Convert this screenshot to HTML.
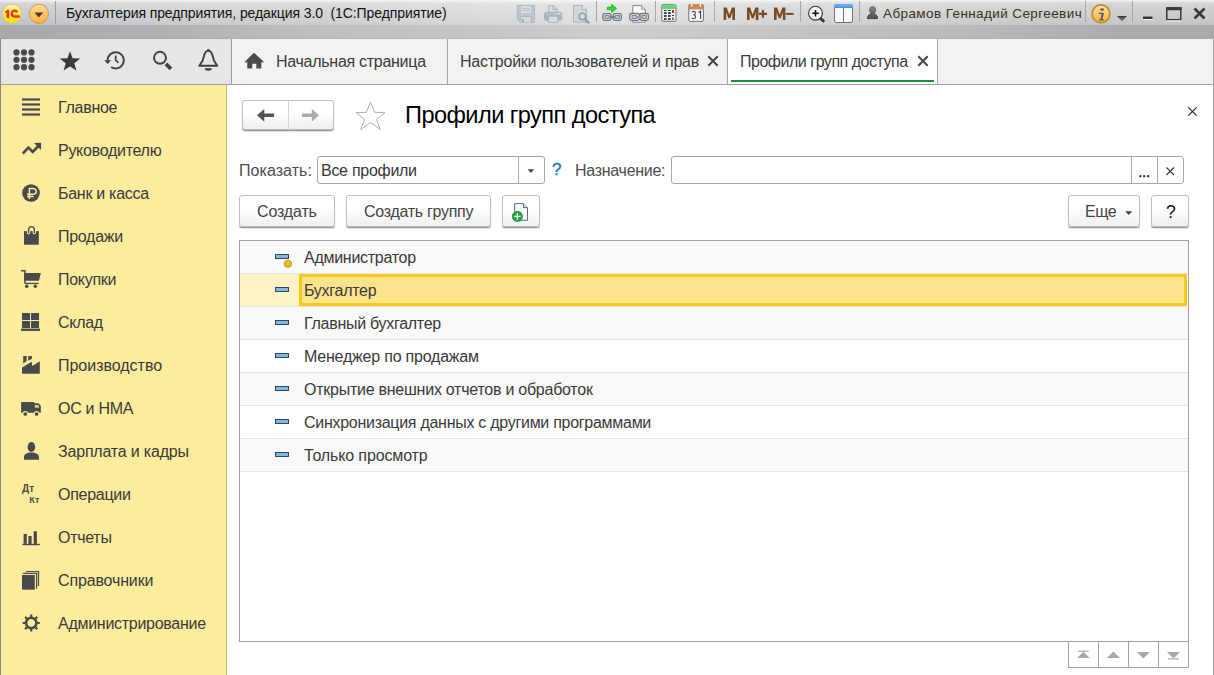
<!DOCTYPE html>
<html><head><meta charset="utf-8">
<style>
*{margin:0;padding:0;box-sizing:border-box}
html,body{width:1214px;height:675px;overflow:hidden;background:#fff;font-family:"Liberation Sans",sans-serif;color:#3a3a3a}
.a{position:absolute}
svg{position:absolute;overflow:visible}
.t16{font-size:16px;line-height:18px;letter-spacing:-0.28px;white-space:nowrap;position:absolute}
#title{left:0;top:0;width:1214px;height:25px;background:linear-gradient(to bottom,rgba(255,255,255,.8) 0,rgba(255,255,255,.5) 2px,rgba(255,255,255,.28) 4px,rgba(255,255,255,.05) 22px,rgba(255,255,255,0) 25px),linear-gradient(to right,#c0c1c4 0,#c9cacb 170px,#cbcccd 320px,#d4d4d5 460px,#dedede 620px,#d0d1d2 810px,#c8c9ca 970px,#c4c5c6 1120px,#c2c3c5 1214px)}
#band{left:0;top:25px;width:1214px;height:14px;background:linear-gradient(to bottom,rgba(0,0,0,0) 75%,rgba(0,0,0,.035) 100%),linear-gradient(to right,#a9aaad 0,#b0b1b3 170px,#bebfc1 320px,#c4c5c6 460px,#cfcfcf 620px,#c2c3c5 810px,#b8b9bb 970px,#abacaf 1120px,#aaabae 1214px)}
#tb{left:0;top:39px;width:231px;height:45px;background:#e6e6e6}
#tabs{left:232px;top:39px;width:981px;height:45px;background:#f2f2f2}
#side{left:0;top:85px;width:226px;height:590px;background:#fbec9e}
.tsep{position:absolute;top:1px;width:1px;height:22px;background:#b0b0b0;box-shadow:1px 0 0 #f0f0f0}
.row{position:absolute;left:240px;width:948px;height:33px;border-bottom:1px solid #e6e6e6}
.btn{position:absolute;border:1px solid #bdbdbd;border-radius:3px;background:linear-gradient(#fff 40%,#efefef);box-shadow:0 1px 0 #9a9a9a,0 2px 1px rgba(0,0,0,.12)}
.ico{fill:#4a4a4a}
</style></head><body>
<div class="a" id="title"></div>
<div class="a" id="band"></div>
<div class="a" id="tb"></div>
<div class="a" style="left:231px;top:39px;width:1px;height:45px;background:#9c9c9c"></div>
<div class="a" id="tabs"></div>
<div class="a" style="left:0;top:84px;width:1214px;height:1px;background:#a0a0a0"></div>
<div class="a" id="side"></div>
<div class="a" style="left:225px;top:85px;width:1px;height:590px;background:#fdf1b0"></div>
<div class="a" style="left:226px;top:85px;width:1px;height:590px;background:#c4b46a"></div>
<div class="a" style="left:1213px;top:39px;width:1px;height:636px;background:#a0a0a0"></div>
<div class="a" style="left:0;top:39px;width:1px;height:636px;background:#8a8a8a"></div>

<!-- ===== TITLE BAR ===== -->
<svg style="left:0;top:0" width="60" height="26">
  <defs>
    <linearGradient id="g1c" x1="0" y1="0" x2="0" y2="1"><stop offset="0" stop-color="#fff7b0"/><stop offset="1" stop-color="#ffe000"/></linearGradient>
    <linearGradient id="gdd" x1="0" y1="0" x2="0" y2="1"><stop offset="0" stop-color="#ffdc98"/><stop offset="1" stop-color="#ffb040"/></linearGradient>
  </defs>
  <circle cx="12" cy="13.8" r="9.6" fill="url(#g1c)" stroke="#d6c26a" stroke-width="0.8"/>
  <path d="M5 11.4 L7.6 9.8 H9.2 V17.9 H6.5 V12.6 L5 13.3Z" fill="#e8361c"/>
  <path d="M17.4 12.3 A3 3 0 1 0 14.3 16.6 H19.9" fill="none" stroke="#e8361c" stroke-width="2.5"/>
  <path d="M14.5 15.2 H19.9" stroke="#f07a3a" stroke-width="0.6"/>
  <circle cx="38.9" cy="13.8" r="9.6" fill="url(#gdd)" stroke="#c09040" stroke-width="0.8"/>
  <path d="M34.5 12.5 L43.1 12.5 L38.8 17.4Z" fill="#4a3a22"/>
  <rect x="55" y="1" width="1" height="23" fill="#a0a0a0"/>
</svg>
<div class="a" style="left:66px;top:5px;font-size:14px;line-height:17px;letter-spacing:-0.09px;color:#111;white-space:pre">Бухгалтерия предприятия, редакция 3.0  (1С:Предприятие)</div>

<!-- toolbar icons (disabled) -->
<svg style="left:510px;top:0" width="210" height="26">
  <path d="M7.3 5.3 H24.6 V22.4 H10.3 L7.3 19.4Z" fill="#b9c5d1" stroke="#a9b5c1" stroke-width="0.8"/>
  <rect x="11" y="6.1" width="10" height="6.8" fill="#dddddd"/>
  <g stroke="#aebdcc" stroke-width="0.9"><line x1="12" y1="8.4" x2="20" y2="8.4"/><line x1="12" y1="10.5" x2="20" y2="10.5"/></g>
  <rect x="10.5" y="16.2" width="11" height="6.2" fill="#a9b5c1"/>
  <rect x="11.2" y="17" width="9.6" height="5.4" fill="#d4dcd8"/>
  <rect x="12" y="19" width="1.8" height="3" fill="#a0acb8"/>
  <!-- printer -->
  <path d="M38.6 5.5 H43.2 L47.2 9.5 V12.5 H38.6Z" fill="#dadcde" stroke="#a4b2c0" stroke-width="0.9"/>
  <path d="M43.2 5.5 V9.5 H47.2" fill="none" stroke="#a4b2c0" stroke-width="0.9"/>
  <rect x="34.5" y="12.3" width="17.3" height="8" rx="1.6" fill="#a9b5c1" stroke="#a2aebb" stroke-width="0.8"/>
  <rect x="35.2" y="12.9" width="16" height="2.2" fill="#b7c1cc"/>
  <circle cx="47.4" cy="13.6" r="0.7" fill="#f4f4f4"/><circle cx="49.5" cy="13.6" r="0.7" fill="#f4f4f4"/>
  <rect x="38.6" y="16.2" width="9.3" height="6.2" fill="#dcdcdc" stroke="#a4b2c0" stroke-width="0.9"/>
  <!-- preview -->
  <path d="M63.5 5.5 H72.4 L76.6 9.7 V22.2 H63.5Z" fill="#d5d5d6" stroke="#a4b2c0" stroke-width="0.9"/>
  <path d="M72.4 5.5 V9.7 H76.6" fill="#e6e8ea" stroke="#a4b2c0" stroke-width="0.9"/>
  <line x1="75.2" y1="19.6" x2="79" y2="23.2" stroke="#8c9ca8" stroke-width="2.4"/>
  <circle cx="72.4" cy="16.4" r="3.2" fill="#d8dce0" stroke="#8c9ca8" stroke-width="1.6"/>
  <circle cx="72.4" cy="16.4" r="2.2" fill="none" stroke="#c4dcf0" stroke-width="0.5"/>
  <rect x="86" y="1" width="1" height="21" fill="#a8a8a8"/>
  <!-- link arrow -->
  <path d="M97.2 7.2 H101.6 V4.4 L106.6 8.45 L101.6 12.4 V9.7 H97.2Z" fill="#22e022" stroke="#14a814" stroke-width="0.7" stroke-linejoin="round"/>
  <g fill="#f0f0f2" stroke="#6e7680" stroke-width="1.3">
    <rect x="92.8" y="13.7" width="8.3" height="6.6" rx="1.8"/>
    <rect x="103.2" y="13.7" width="8.1" height="6.6" rx="1.8"/>
  </g>
  <g fill="#c4c8cc" stroke="#7a8088" stroke-width="0.9"><rect x="94.9" y="15.5" width="4.2" height="3"/><rect x="105.2" y="15.5" width="4.2" height="3"/></g>
  <rect x="99.5" y="16" width="5.5" height="2.2" fill="#7a8088"/>
  <!-- link doc -->
  <path d="M122.8 5.6 H131.6 L135.3 9.3 V22.2 H122.8Z" fill="#fafafa" stroke="#7a8490" stroke-width="1"/>
  <path d="M131.6 5.6 V9.3 H135.3" fill="#e4e8ec" stroke="#7a8490" stroke-width="0.8"/>
  <g fill="#f0f0f2" stroke="#6e7680" stroke-width="1.3">
    <rect x="119.8" y="13.5" width="9.6" height="6.8" rx="1.8"/>
    <rect x="130" y="13.5" width="8.4" height="6.8" rx="1.8"/>
  </g>
  <g fill="#c4c8cc" stroke="#7a8088" stroke-width="0.9"><rect x="122" y="15.4" width="4.6" height="3"/><rect x="132" y="15.4" width="4.4" height="3"/></g>
  <rect x="126.5" y="16" width="6" height="2.2" fill="#9aa0a8"/>
  <rect x="145" y="1" width="1" height="21" fill="#a8a8a8"/>
  <!-- calculator -->
  <rect x="151.8" y="4.7" width="14.2" height="16.6" rx="1.2" fill="#eef3f7" stroke="#6a7480" stroke-width="1"/>
  <rect x="152.3" y="5.2" width="13.2" height="3.8" fill="#5cdc64"/>
  <g fill="#2a2a2a"><rect x="154" y="10" width="2.7" height="1"/><rect x="158" y="10" width="2.7" height="1"/><rect x="154" y="12.2" width="2.7" height="1.7"/><rect x="158" y="12.2" width="2.7" height="1.7"/><rect x="154" y="15.1" width="2.7" height="1.7"/><rect x="158" y="15.1" width="2.7" height="1.7"/><rect x="154" y="18.2" width="2.7" height="1.7"/><rect x="158" y="18.2" width="2.7" height="1.7"/><rect x="162" y="15.1" width="2" height="0.9"/></g>
  <rect x="162" y="17.4" width="2" height="2.6" fill="#777"/>
  <rect x="162" y="10" width="2" height="3" fill="#f01818"/>
  <!-- calendar -->
  <rect x="178.8" y="4.5" width="14.6" height="16.9" rx="1.5" fill="#f4f7fa" stroke="#6a7480" stroke-width="1"/>
  <path d="M178.3 9.6 V6 Q178.3 4 180.3 4 H191.8 Q193.8 4 193.8 6 V9.6Z" fill="#c88a5c"/>
  <rect x="181.1" y="4" width="1.2" height="2.7" fill="#fff"/><rect x="189.8" y="4" width="1.2" height="2.7" fill="#fff"/>
  <path d="M182 12.4 Q182.8 11.3 183.8 11.3 Q185.4 11.3 185.4 12.9 Q185.4 14.6 183.4 14.8 Q185.6 15 185.6 16.8 Q185.6 18.7 183.7 18.7 Q182.4 18.7 181.8 17.7 M188.4 12.5 L190.6 11.2 V18.9" fill="none" stroke="#3a3a3a" stroke-width="1.05"/>
</svg>
<svg style="left:710px;top:0" width="160" height="26">
  <rect x="4" y="1" width="1" height="21" fill="#a8a8a8"/>
  <g fill="#7a4a22">
  <path transform="translate(13.6 7.6)" d="M0 12.5 V0 H3.1 L5.7 7.2 L8.3 0 H11.4 V12.5 H8.8 V4.6 L6.7 10.6 H4.7 L2.6 4.6 V12.5Z"/>
  <path transform="translate(37 7.6)" d="M0 12.5 V0 H3.1 L5.7 7.2 L8.3 0 H11.4 V12.5 H8.8 V4.6 L6.7 10.6 H4.7 L2.6 4.6 V12.5Z"/>
  <rect x="48.8" y="12.75" width="8.2" height="2.2"/><rect x="51.8" y="9.9" width="2.2" height="7.9"/>
  <path transform="translate(64 7.6)" d="M0 12.5 V0 H3.1 L5.7 7.2 L8.3 0 H11.4 V12.5 H8.8 V4.6 L6.7 10.6 H4.7 L2.6 4.6 V12.5Z"/>
  <rect x="75.9" y="12.9" width="7.8" height="2"/>
  </g>
  <rect x="90" y="1" width="1" height="21" fill="#a8a8a8"/>
  <defs><linearGradient id="gwb" x1="0" y1="0" x2="0" y2="1"><stop offset="0" stop-color="#74c0f4"/><stop offset="1" stop-color="#3d92e0"/></linearGradient></defs>
  <line x1="109.6" y1="17.6" x2="114.3" y2="21.8" stroke="#333" stroke-width="2.8"/>
  <circle cx="105.5" cy="13.2" r="6.9" fill="#f4f4f4" stroke="#333" stroke-width="1.1"/>
  <path d="M102.2 13.2 H108.8 M105.5 9.9 V16.5" stroke="#111" stroke-width="1.5"/>
  <rect x="124.5" y="4.5" width="18" height="18" rx="1.5" fill="#fafafa" stroke="#6a7480"/>
  <path d="M124 8 V6 Q124 4.2 126 4.2 H141 Q143 4.2 143 6 V8Z" fill="url(#gwb)"/>
  <rect x="133" y="8" width="1" height="14" fill="#6a7480"/>
  <rect x="149" y="1" width="1" height="21" fill="#a8a8a8"/>
</svg>
<!-- user -->
<svg style="left:866px;top:6px" width="13" height="14">
  <defs><linearGradient id="gu" gradientUnits="userSpaceOnUse" x1="0" y1="0" x2="0" y2="13"><stop offset="0" stop-color="#8a8a8a"/><stop offset="1" stop-color="#505050"/></linearGradient></defs>
  <path d="M1.4 12.6 C1.4 9.6 3.4 7.6 6.5 7.6 C9.6 7.6 11.6 9.6 11.6 12.6 Z" fill="url(#gu)" stroke="#3a3a3a" stroke-width="0.9"/>
  <ellipse cx="6.6" cy="4" rx="3.2" ry="3.4" fill="url(#gu)" stroke="#5a5a5a" stroke-width="0.6"/>
</svg>
<div class="a" style="left:883px;top:6px;font-size:13.5px;line-height:16px;letter-spacing:0.4px;color:#3a3020;white-space:nowrap">Абрамов Геннадий Сергеевич</div>
<svg style="left:1080px;top:0" width="134" height="26">
  <defs><linearGradient id="gi" x1="0" y1="0" x2="0" y2="1"><stop offset="0" stop-color="#ffe0a8"/><stop offset="1" stop-color="#f8b040"/></linearGradient>
  <linearGradient id="gt" x1="0" y1="0" x2="0" y2="1"><stop offset="0" stop-color="#333"/><stop offset="1" stop-color="#999"/></linearGradient></defs>
  <rect x="5" y="1" width="1" height="21" fill="#a8a8a8"/>
  <circle cx="21" cy="13.8" r="8.9" fill="url(#gi)" stroke="#b8942a" stroke-width="1.8"/>
  <ellipse cx="22.05" cy="9.5" rx="1.9" ry="1.25" fill="#5a5a5a"/>
  <path d="M19 12.5 L24 12.9 L22.4 19.1 L23.8 19.1 L23.4 20.6 L19 20.6 L19.4 19.1 L20.6 19.1 L21.6 14.1 L18.8 14Z" fill="#5a5a5a"/>
  <path d="M37 16 L47 16 L42 21.5Z" fill="url(#gt)"/>
  <rect x="52" y="1" width="1" height="21" fill="#a8a8a8"/>
  <rect x="63" y="16.5" width="9.5" height="2.6" fill="#3a3a3a"/>
  <rect x="63" y="19.1" width="9.5" height="1" fill="#f4f4f4"/>
  <rect x="86.75" y="8" width="14" height="11.7" fill="none" stroke="#3a3a3a" stroke-width="1.5"/>
  <rect x="86" y="7.2" width="15.5" height="3" fill="#3a3a3a"/>
  <rect x="86" y="20.4" width="15.5" height="1" fill="#f4f4f4"/>
  <path d="M114.5 8.5 L124.5 18.5 M124.5 8.5 L114.5 18.5" stroke="#3a3a3a" stroke-width="2.6"/>
</svg>

<!-- ===== LEFT TOOLBAR ===== -->
<svg style="left:0;top:39px" width="231" height="45">
  <g class="ico" fill="#404040">
    <circle cx="16.5" cy="13.4" r="3.1"/><circle cx="24" cy="13.4" r="3.1"/><circle cx="31.5" cy="13.4" r="3.1"/>
    <circle cx="16.5" cy="20.8" r="3.1"/><circle cx="24" cy="20.8" r="3.1"/><circle cx="31.5" cy="20.8" r="3.1"/>
    <circle cx="16.5" cy="28.2" r="3.1"/><circle cx="24" cy="28.2" r="3.1"/><circle cx="31.5" cy="28.2" r="3.1"/>
  </g>
  <path fill="#3a3a3a" d="M70 12.3 L72.6 19.3 L80.3 19.6 L74.3 24.3 L76.4 31.5 L70 27.4 L63.6 31.5 L65.7 24.3 L59.7 19.6 L67.4 19.3Z"/>
  <!-- history -->
  <path d="M107.6 21.6 A8.1 8.1 0 1 1 111.05 27.93" fill="none" stroke="#404040" stroke-width="1.9"/>
  <path d="M104.3 21.2 H111 L107.65 25Z" fill="#404040"/>
  <path d="M115.7 16.4 V21.3 L118.5 23.6" fill="none" stroke="#404040" stroke-width="1.7"/>
  <!-- search -->
  <circle cx="160" cy="18.8" r="6" fill="none" stroke="#404040" stroke-width="1.9"/>
  <path d="M165.9 24.9 L171 29.8" stroke="#404040" stroke-width="3.8"/>
  <!-- bell -->
  <path d="M199.3 26.8 L202.4 22 C203.6 19.5 203.8 16 205 14 C206 12.1 207.2 11.6 208.3 11.6 C209.4 11.6 210.6 12.1 211.6 14 C212.8 16 213 19.5 214.2 22 L217.3 26.8Z" fill="none" stroke="#404040" stroke-width="1.9" stroke-linejoin="round"/>
  <circle cx="208.3" cy="11.3" r="1.4" fill="#404040"/>
  <path d="M204.8 29.2 A3.5 2.5 0 0 0 211.8 29.2Z" fill="#404040"/>
</svg>

<!-- ===== TABS ===== -->
<svg style="left:244px;top:52px" width="22" height="18">
  <path d="M10 0.8 L20.3 10.2 H17.3 V16.5 H12.3 V11.8 H8.3 V16.5 H3.3 V10.2 H0.3Z" fill="#4a4a4a"/>
</svg>
<div class="t16" style="left:276px;top:53px">Начальная страница</div>
<div class="a" style="left:447px;top:39px;width:1px;height:45px;background:#a6a6a6"></div>
<div class="t16" style="left:460px;top:53px;letter-spacing:-0.24px">Настройки пользователей и прав</div>
<svg style="left:707px;top:55px" width="12" height="12"><path d="M1.3 1.3 L10.7 10.7 M10.7 1.3 L1.3 10.7" stroke="#444" stroke-width="2"/></svg>
<div class="a" style="left:727px;top:39px;width:1px;height:45px;background:#a6a6a6"></div>
<div class="a" style="left:728px;top:39px;width:209px;height:45px;background:#fff"></div>
<div class="t16" style="left:740px;top:53px;letter-spacing:-0.48px">Профили групп доступа</div>
<svg style="left:917px;top:55px" width="12" height="12"><path d="M1.3 1.3 L10.7 10.7 M10.7 1.3 L1.3 10.7" stroke="#444" stroke-width="2"/></svg>
<div class="a" style="left:731px;top:80px;width:203px;height:2px;background:#12933c"></div>
<div class="a" style="left:937px;top:39px;width:1px;height:45px;background:#a6a6a6"></div>

<!-- ===== SIDEBAR ===== -->
<svg style="left:0;top:85px" width="60" height="560">
  <g fill="#4a4a4a">
    <rect x="22" y="13.4" width="18" height="2.2"/><rect x="22" y="18.4" width="18" height="2.2"/><rect x="22" y="23.4" width="18" height="2.2"/><rect x="22" y="28.4" width="18" height="2.2"/>
  </g>
  <path d="M22.8 68.5 L28.4 62.6 L32.7 66.8 L38 61.5" fill="none" stroke="#4a4a4a" stroke-width="2.6"/>
  <path d="M34 58 L41.2 57.8 L41 65Z" fill="#4a4a4a"/>
  <!-- ruble -->
  <circle cx="31" cy="108" r="8.8" fill="#4a4a4a"/>
  <path d="M29.4 114 V103.6 H32.6 C35 103.6 36.2 104.8 36.2 106.5 C36.2 108.2 35 109.3 32.6 109.3 H27 M27 111.6 H33.6" fill="none" stroke="#fbec9e" stroke-width="1.5"/>
  <!-- bag -->
  <rect x="24" y="146.1" width="14.8" height="13.6" fill="#4a4a4a"/>
  <path d="M28.6 147.6 V144.5 A2.85 2.85 0 0 1 34.3 144.5 V147.6" fill="none" stroke="#fbec9e" stroke-width="3.6" stroke-linecap="round"/>
  <path d="M28.6 148.3 V144.5 A2.85 2.85 0 0 1 34.3 144.5 V148.3" fill="none" stroke="#4a4a4a" stroke-width="1.4"/>
  <!-- cart -->
  <path d="M21.1 185.8 H24.9 V198.5" fill="none" stroke="#4a4a4a" stroke-width="1.5"/>
  <path d="M24.2 188.1 H40.9 L38.9 195.7 H24.2Z" fill="#4a4a4a"/>
  <rect x="25" y="197.8" width="13.7" height="1.3" fill="#4a4a4a"/>
  <circle cx="26.7" cy="201.2" r="1.75" fill="#4a4a4a"/><circle cx="35.3" cy="201.2" r="1.75" fill="#4a4a4a"/>
  <!-- sklad -->
  <g fill="#4a4a4a"><rect x="22" y="228" width="8" height="7"/><rect x="31" y="228" width="8" height="7"/><rect x="22" y="236" width="8" height="7"/><rect x="31" y="236" width="8" height="7"/><rect x="21" y="243.6" width="19" height="2.3"/></g>
  <!-- factory -->
  <path d="M22 288.8 V282.4 L31.7 276.8 L32.3 281 L39.8 276.2 V288.8Z M23.2 271 H26.7 V275.9 L23.2 278.4Z M28.2 271 H31.9 V273.7 L28.2 275.7Z" fill="#4a4a4a"/>
  <!-- truck -->
  <path d="M21.1 317.1 H34.3 V318.2 H38.6 L40.8 321 V327.8 H21.1Z" fill="#4a4a4a"/>
  <path d="M34.9 320 H38.4 L39.3 322.8 H34.9Z" fill="#fbec9e" opacity="0.8"/>
  <circle cx="25.3" cy="329" r="2.9" fill="#fbec9e"/><circle cx="36.6" cy="329" r="2.9" fill="#fbec9e"/>
  <circle cx="25.3" cy="329" r="1.85" fill="#4a4a4a"/><circle cx="36.6" cy="329" r="1.85" fill="#4a4a4a"/>
  <!-- person -->
  <ellipse cx="31.4" cy="362" rx="3.8" ry="5.1" fill="#4a4a4a"/>
  <path d="M24 374.7 V372 C24 369.2 27 367.6 31.4 367.6 C35.8 367.6 38.9 369.2 38.9 372 V374.7Z" fill="#4a4a4a"/>
  <!-- Dt Kt -->
  <text x="21.9" y="407.1" font-family="Liberation Sans" font-weight="bold" font-size="10" fill="#4a4a4a" letter-spacing="0.3">Дт</text>
  <text x="29.2" y="417.8" font-family="Liberation Sans" font-weight="bold" font-size="9" fill="#4a4a4a" letter-spacing="0.2">Кт</text>
  <!-- chart -->
  <g fill="#4a4a4a"><rect x="23.6" y="448.9" width="3.2" height="10"/><rect x="28.4" y="451" width="3.2" height="8"/><rect x="33.7" y="446.2" width="3.2" height="12.7"/><rect x="22.3" y="458.8" width="17.5" height="1.4"/></g>
  <!-- books -->
  <g fill="none" stroke="#4a4a4a" stroke-width="1.2"><path d="M23.2 488.4 H36.6 V503.8"/><path d="M26.1 486.5 H38.5 V501"/></g>
  <rect x="22" y="490" width="12.8" height="14.7" fill="#4a4a4a"/>
  <!-- gear -->
  <g transform="translate(31.2 538)">
    <circle r="5.2" fill="none" stroke="#4a4a4a" stroke-width="2.6"/>
    <g stroke="#4a4a4a" stroke-width="2.2">
      <path d="M0 -8.6 V-6 M0 8.6 V6 M-8.6 0 H-6 M8.6 0 H6"/>
      <path d="M-6.1 -6.1 L-4.3 -4.3 M6.1 6.1 L4.3 4.3 M6.1 -6.1 L4.3 -4.3 M-6.1 6.1 L-4.3 4.3"/>
    </g>
  </g>
</svg>
<div class="t16" style="left:58px;top:99px">Главное</div>
<div class="t16" style="left:58px;top:142px">Руководителю</div>
<div class="t16" style="left:58px;top:185px">Банк и касса</div>
<div class="t16" style="left:58px;top:228px">Продажи</div>
<div class="t16" style="left:58px;top:271px">Покупки</div>
<div class="t16" style="left:58px;top:314px">Склад</div>
<div class="t16" style="left:58px;top:357px;letter-spacing:-0.02px">Производство</div>
<div class="t16" style="left:58px;top:400px">ОС и НМА</div>
<div class="t16" style="left:58px;top:443px;letter-spacing:-0.19px">Зарплата и кадры</div>
<div class="t16" style="left:58px;top:486px">Операции</div>
<div class="t16" style="left:58px;top:529px">Отчеты</div>
<div class="t16" style="left:58px;top:572px;letter-spacing:-0.15px">Справочники</div>
<div class="t16" style="left:58px;top:615px">Администрирование</div>

<!-- ===== FORM HEADER ===== -->
<div class="btn" style="left:242px;top:100px;width:92px;height:30px"></div>
<div class="a" style="left:288px;top:101px;width:1px;height:29px;background:#d6d6d6"></div>
<svg style="left:242px;top:100px" width="92" height="30">
  <path d="M15 15.3 L22.3 8.9 V13.6 H32.1 V17 H22.3 V21.7Z" fill="#555"/>
  <path d="M77 15.3 L69.8 8.9 V13.6 H60 V17 H69.8 V21.7Z" fill="#aaa"/>
</svg>
<svg style="left:350px;top:96px" width="40" height="40">
  <path d="M20.5 6.2 L24.8 16.4 L35 16.4 L26.5 23.4 L30.2 33.5 L20.5 26.5 L10.8 33.5 L14.5 23.4 L6 16.4 L16.2 16.4Z" fill="none" stroke="#a8afba" stroke-width="1"/>
</svg>
<div class="a" style="left:405px;top:102px;font-size:23.6px;line-height:27px;letter-spacing:-0.57px;color:#000;white-space:nowrap">Профили групп доступа</div>
<svg style="left:1184px;top:103px" width="16" height="16"><path d="M4.3 4.3 L12.6 12.6 M12.6 4.3 L4.3 12.6" stroke="#222" stroke-width="1.15"/></svg>

<!-- ===== FILTER ===== -->
<div class="t16" style="left:239px;top:162px;color:#4d4d4d;letter-spacing:0.05px">Показать:</div>
<div class="a" style="left:317px;top:156px;width:228px;height:28px;border:1px solid #a8a8a8;border-radius:3px;background:#fff"></div>
<div class="a" style="left:518px;top:157px;width:1px;height:26px;background:#a8a8a8"></div>
<svg style="left:519px;top:157px" width="26" height="26"><path d="M8.7 12.3 H15.1 L11.9 16Z" fill="#444"/></svg>
<div class="t16" style="left:321px;top:162px;color:#383838">Все профили</div>
<div class="t16" style="left:552px;top:160px;color:#1676c6;font-size:17px;line-height:20px;-webkit-text-stroke:0.35px #1676c6">?</div>
<div class="t16" style="left:575px;top:162px;color:#4d4d4d">Назначение:</div>
<div class="a" style="left:671px;top:156px;width:513px;height:28px;border:1px solid #a8a8a8;border-radius:3px;background:#fff"></div>
<div class="a" style="left:1131px;top:157px;width:1px;height:26px;background:#a8a8a8"></div>
<div class="a" style="left:1157px;top:157px;width:1px;height:26px;background:#a8a8a8"></div>
<svg style="left:1132px;top:157px" width="52" height="26">
  <g fill="#222"><rect x="7.3" y="18.2" width="2" height="2"/><rect x="11.2" y="18.2" width="2" height="2"/><rect x="15.1" y="18.2" width="2" height="2"/></g>
  <path d="M34.5 10.5 L42 18 M42 10.5 L34.5 18" stroke="#333" stroke-width="1.1"/>
</svg>

<!-- ===== BUTTONS ===== -->
<div class="btn" style="left:239px;top:195px;width:96px;height:32px"></div>
<div class="t16" style="left:257px;top:203px;color:#444;letter-spacing:-0.15px">Создать</div>
<div class="btn" style="left:346px;top:195px;width:145px;height:32px"></div>
<div class="t16" style="left:364px;top:203px;color:#444">Создать группу</div>
<div class="btn" style="left:502px;top:195px;width:38px;height:32px"></div>
<svg style="left:502px;top:195px" width="37" height="32">
  <path d="M12.6 8.6 H21.5 L25.5 12.6 V25.3 H12.6Z" fill="#f6f6f6" stroke="#5a6a80" stroke-width="1"/>
  <path d="M21.5 8.6 V12.6 H25.5" fill="#e0e4ea" stroke="#5a6a80" stroke-width="1"/>
  <circle cx="15.4" cy="21.4" r="5" fill="#26a83e" stroke="#14892c" stroke-width="0.9"/>
  <path d="M15.4 18.3 V24.5 M12.3 21.4 H18.5" stroke="#fff" stroke-width="1.3"/>
</svg>
<div class="btn" style="left:1068px;top:195px;width:72px;height:32px"></div>
<div class="t16" style="left:1085px;top:203px;color:#444;letter-spacing:-0.4px">Еще</div>
<svg style="left:1068px;top:195px" width="72" height="32"><path d="M57.2 16.3 H64.2 L60.7 19.9Z" fill="#444"/></svg>
<div class="btn" style="left:1151px;top:195px;width:38px;height:32px"></div>
<div class="a" style="left:1166px;top:202px;font-size:17.5px;line-height:20px;color:#111;-webkit-text-stroke:0.1px #111">?</div>

<!-- ===== TABLE ===== -->
<div class="a" style="left:239px;top:240px;width:950px;height:402px;border:1px solid #a4a4a4"></div>
<div class="row" style="top:241px;background:#f9f9f9"></div>
<div class="row" style="top:274px;background:#fdf2c6;width:947px"></div><div class="a" style="left:1187px;top:274px;width:1px;height:32px;background:#fff"></div>
<div class="row" style="top:307px;background:#f9f9f9"></div>
<div class="row" style="top:340px;background:#fff"></div>
<div class="row" style="top:373px;background:#f9f9f9"></div>
<div class="row" style="top:406px;background:#fff"></div>
<div class="row" style="top:439px;background:#f9f9f9"></div>
<div class="a" style="left:299px;top:274px;width:888px;height:32px;border:3px solid #f8c81c;background:#fde38c"></div>
<svg style="left:240px;top:241px" width="60" height="231">
  <g fill="#8cb4d8" stroke="#234a70" stroke-width="1">
    <rect x="35.5" y="13.5" width="13" height="4"/>
    <rect x="35.5" y="46.5" width="13" height="4"/>
    <rect x="35.5" y="79.5" width="13" height="4"/>
    <rect x="35.5" y="112.5" width="13" height="4"/>
    <rect x="35.5" y="145.5" width="13" height="4"/>
    <rect x="35.5" y="178.5" width="13" height="4"/>
    <rect x="35.5" y="211.5" width="13" height="4"/>
  </g>
  <circle cx="47.9" cy="22.8" r="3.6" fill="#f0c020" stroke="#c09010" stroke-width="0.9"/>
</svg>
<div class="t16" style="left:304px;top:249px">Администратор</div>
<div class="t16" style="left:304px;top:282px">Бухгалтер</div>
<div class="t16" style="left:304px;top:315px">Главный бухгалтер</div>
<div class="t16" style="left:304px;top:348px;letter-spacing:-0.21px">Менеджер по продажам</div>
<div class="t16" style="left:304px;top:381px;letter-spacing:-0.25px">Открытие внешних отчетов и обработок</div>
<div class="t16" style="left:304px;top:414px">Синхронизация данных с другими программами</div>
<div class="t16" style="left:304px;top:447px;letter-spacing:-0.13px">Только просмотр</div>

<!-- bottom nav -->
<div class="a" style="left:1068px;top:642px;width:121px;height:26px;border:1px solid #a4a4a4;border-top:none;background:#fff"></div>
<div class="a" style="left:1098px;top:642px;width:1px;height:25px;background:#a4a4a4"></div>
<div class="a" style="left:1128px;top:642px;width:1px;height:25px;background:#a4a4a4"></div>
<div class="a" style="left:1158px;top:642px;width:1px;height:25px;background:#a4a4a4"></div>
<svg style="left:1068px;top:641px" width="121" height="27">
  <g fill="#a8a8a8">
    <rect x="10" y="9.6" width="10.7" height="1.2"/><path d="M9.2 17 L15.4 10.8 L21.6 17Z"/>
    <path d="M38.8 17 L45.4 10.4 L52 17Z"/>
    <path d="M68.9 11 H82 L75.4 17.6Z"/>
    <path d="M99 11 H112 L105.5 17.5Z"/><rect x="100" y="17.3" width="11" height="1.2"/>
  </g>
</svg>
</body></html>
